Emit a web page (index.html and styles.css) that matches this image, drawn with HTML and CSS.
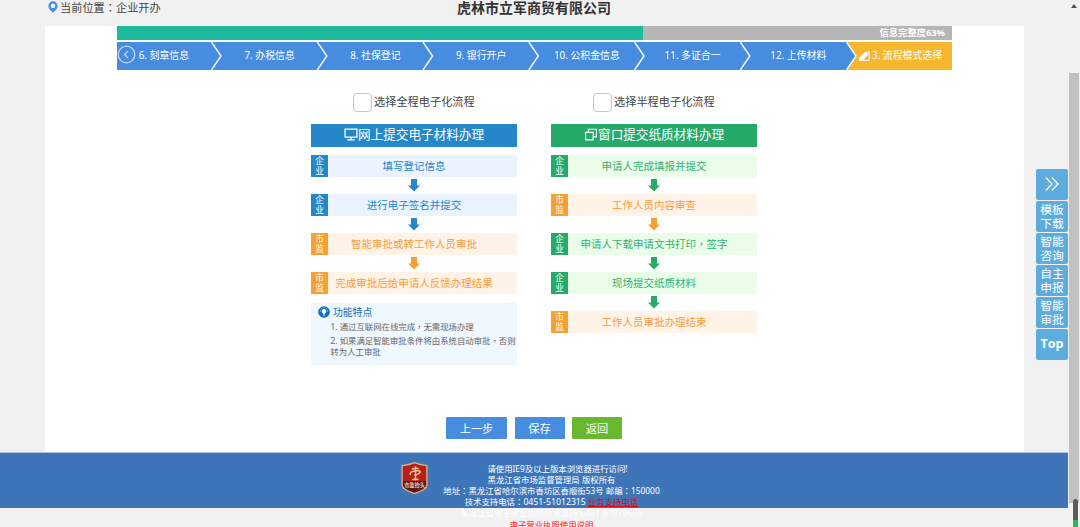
FILE: index.html
```html
<!DOCTYPE html>
<html lang="zh-CN">
<head>
<meta charset="utf-8">
<title>企业开办</title>
<link rel="stylesheet" href="styles.css">
</head>
<body>
<div class="page">
  <header class="top">
    <div class="crumb">
      <svg class="pin" viewBox="0 0 10 12"><path fill="#468cdf" fill-rule="evenodd" d="M5 .3a4.6 4.6 0 0 0-4.6 4.6C.4 8 3.600 10 5 12c1.400-2 4.600-4 4.600-7.100A4.600 4.600 0 0 0 5 .3zM5 2.600a2.300 2.300 0 1 1 0 4.600 2.300 2.300 0 0 1 0-4.600z"/></svg>
      <span>当前位置<span class="punc" lang="zh-TW">：</span>企业开办</span>
    </div>
    <h1 class="company">虎林市立军商贸有限公司</h1>
  </header>

  <main class="panel">
    <div class="progress"><div class="progress-fill" style="width:63%"></div><span class="progress-text">信息完整度63%</span></div>
    <nav class="steps">
      <div class="step">6. 刻章信息</div>
      <div class="step">7. 办税信息</div>
      <div class="step">8. 社保登记</div>
      <div class="step">9. 银行开户</div>
      <div class="step">10. 公积金信息</div>
      <div class="step">11. 多证合一</div>
      <div class="step">12. 上传材料</div>
      <div class="step current">13. 流程模式选择</div>
      <svg class="steps-lines" viewBox="0 0 835 28" fill="none" stroke="#f1f6fc" stroke-width="1.500">
        <path d="M730 0h105v28H730l9.500-14z" fill="#f6b62e" stroke="none"/>
        <path d="M94.500 0l9.500 14-9.500 14M200.300 0l9.500 14-9.500 14M306 0l9.500 14-9.500 14M411.800 0l9.500 14-9.500 14M517.500 0l9.500 14-9.500 14M623.300 0l9.500 14-9.500 14M729.500 0l9.500 14-9.500 14"/>
      </svg>
      <svg class="prev" viewBox="0 0 18 18" fill="none" stroke="#c3daf6"><circle cx="9" cy="9" r="7.900" stroke-width="1.200"/><path d="M10.300 5.800L7.200 9l3.100 3.200" stroke-width="1.300"/></svg>
      <svg class="pencil" viewBox="0 0 12 12" fill="#fff"><path d="M1 8L7.300 1.700q.7-.7 1.400 0l1.600 1.600q.7.700 0 1.400L4 11H1zM6 9.800h5.500V11H4.800z"/></svg>
    </nav>

    <div class="flows">
      <section class="flow online">
        <label class="choice"><span class="box"></span>选择全程电子化流程</label>
        <h2 class="flow-title"><svg class="icon" viewBox="0 0 13 12" fill="none" stroke="#fff" stroke-width="1.200"><path d="M1 1h11v7.500H1zM6.500 8.500V11M3 11h7"/></svg>网上提交电子材料办理</h2>
        <div class="task"><span class="tag">企<br>业</span><span class="name">填写登记信息</span></div>
        <svg class="arrow" viewBox="0 0 12 13"><path d="M3 0h6v6.500h3L6 12.500 0 6.500h3z"/></svg>
        <div class="task"><span class="tag">企<br>业</span><span class="name">进行电子签名并提交</span></div>
        <svg class="arrow" viewBox="0 0 12 13"><path d="M3 0h6v6.500h3L6 12.500 0 6.500h3z"/></svg>
        <div class="task gov"><span class="tag">市<br>监</span><span class="name">智能审批或转工作人员审批</span></div>
        <svg class="arrow gov" viewBox="0 0 12 13"><path d="M3 0h6v6.500h3L6 12.500 0 6.500h3z"/></svg>
        <div class="task gov"><span class="tag">市<br>监</span><span class="name">完成审批后给申请人反馈办理结果</span></div>
        <div class="features">
          <h3 class="features-title"><svg class="bulb" viewBox="0 0 12 12"><circle cx="6" cy="6" r="5.800" fill="#0f70b7"/><path fill="#fff" d="M6 2.800a2.200 2.200 0 0 1 1.200 4.100V8H4.800V6.900A2.200 2.200 0 0 1 6 2.800zM5 8.600h2v.8H5z"/><path stroke="#fff" stroke-width=".7" d="M2 5h1M9 5h1M6 1v1M3 2.300l.6.600M9 2.300l-.6.600"/></svg>功能特点</h3>
          <p class="note">1. 通过互联网在线完成<span class="punc" lang="zh-TW">，</span>无需现场办理</p>
          <p class="note">2. 如果满足智能审批条件将由系统自动审批<span class="punc" lang="zh-TW">，</span>否则<br>转为人工审批</p>
        </div>
      </section>

      <section class="flow window">
        <label class="choice"><span class="box"></span>选择半程电子化流程</label>
        <h2 class="flow-title"><svg class="icon" viewBox="0 0 13 12" fill="none" stroke="#fff" stroke-width="1"><path d="M1.500 4h7v7h-7zM4 4V1.200h7.500v7H8.500"/></svg>窗口提交纸质材料办理</h2>
        <div class="task"><span class="tag">企<br>业</span><span class="name">申请人完成填报并提交</span></div>
        <svg class="arrow" viewBox="0 0 12 13"><path d="M3 0h6v6.500h3L6 12.500 0 6.500h3z"/></svg>
        <div class="task gov"><span class="tag">市<br>监</span><span class="name">工作人员内容审查</span></div>
        <svg class="arrow gov" viewBox="0 0 12 13"><path d="M3 0h6v6.500h3L6 12.500 0 6.500h3z"/></svg>
        <div class="task"><span class="tag">企<br>业</span><span class="name">申请人下载申请文书打印<span class="punc" lang="zh-TW">，</span>签字</span></div>
        <svg class="arrow" viewBox="0 0 12 13"><path d="M3 0h6v6.500h3L6 12.500 0 6.500h3z"/></svg>
        <div class="task"><span class="tag">企<br>业</span><span class="name">现场提交纸质材料</span></div>
        <svg class="arrow" viewBox="0 0 12 13"><path d="M3 0h6v6.500h3L6 12.500 0 6.500h3z"/></svg>
        <div class="task gov"><span class="tag">市<br>监</span><span class="name">工作人员审批办理结束</span></div>
      </section>
    </div>

    <div class="actions">
      <button class="btn wide">上一步</button>
      <button class="btn">保存</button>
      <button class="btn back">返回</button>
    </div>
  </main>

  <footer class="footer">
    <svg class="badge" viewBox="0 0 26 31">
      <path d="M1 3.500Q8 3 13 .7q5 2.300 12 2.800v19q0 4-12 8-12-4-12-8z" fill="#b3221a" stroke="#e0ad7c" stroke-width="1.300"/>
      <path d="M2 18.500h22v4q0 3.500-11 7-11-3.500-11-7z" fill="#571714"/>
      <path d="M14 4v14M10.500 7q4-1.500 6.500-.500M9.500 12.500c-3-2.500 4-4.500 8-4 3 1-1 4-5 4.200M11 17.300q3-1.500 6 0" fill="none" stroke="#f4c28e" stroke-width="1.400"/>
      <text x="13" y="24.200" class="badge-text">市监抬头</text>
    </svg>
    <div class="footer-text">
      <p class="lead">请使用IE9及以上版本浏览器进行访问!</p>
      <p>黑龙江省市场监督管理局 版权所有</p>
      <p>地址<span class="punc" lang="zh-TW">：</span>黑龙江省哈尔滨市香坊区香顺街53号 邮编<span class="punc" lang="zh-TW">：</span>150000</p>
      <p>技术支持电话<span class="punc" lang="zh-TW">：</span><span class="phone">0451-51012315</span> <a class="hot">业务支持电话</a></p>
      <p>黑龙江省电子营业执照技术支持 <span class="phone">0451-87979695</span></p>
      <p class="red">电子营业执照使用说明</p>
    </div>
  </footer>
</div>

<aside class="side">
  <div class="side-item"><svg class="more" viewBox="0 0 14 14" fill="none" stroke="#fff" stroke-width="1.300"><path d="M1 .8L7 7l-6 6.200M7 .8L13 7l-6 6.200"/></svg></div>
  <div class="side-item">模板<br>下载</div>
  <div class="side-item">智能<br>咨询</div>
  <div class="side-item">自主<br>申报</div>
  <div class="side-item">智能<br>审批</div>
  <div class="side-item to-top">Top</div>
</aside>

<div class="scrollbar">
  <svg class="up" viewBox="0 0 6 4"><path d="M3 0l3 4H0z" fill="#505050"/></svg>
  <div class="thumb"></div>
  <div class="meter"><i class="meter-level"></i></div>
</div>
</body>
</html>
```
FILE: styles.css
```css
* { box-sizing: border-box; }
body {
  margin: 0;
  width: 1080px;
  height: 527px;
  overflow: hidden;
  display: flex;
  background: #f1f1f1;
  color: #444;
  font-family: "Noto Sans", "Noto Sans CJK SC", sans-serif;
}
h1, h2, h3, p { margin: 0; font-weight: 400; }
svg { display: block; flex: none; }
.punc { font-family: "Noto Sans CJK TC", sans-serif; line-height: 1; }
.page { width: 1068px; flex: none; }

.top { height: 26px; position: relative; }
.crumb {
  display: flex;
  gap: 2px;
  padding-left: 48px;
  font-size: 11.200px;
  line-height: 15px;
}
.pin { width: 10px; height: 12px; margin-top: 1px; }
.company {
  position: absolute;
  top: -2px;
  left: 0;
  width: 100%;
  text-align: center;
  font-size: 14px;
  line-height: 20px;
  font-weight: 700;
  color: #333;
}

.panel {
  width: 979px;
  height: 426px;
  margin-left: 45px;
  padding: 0 72px;
  background: #fff;
}
.progress {
  display: flex;
  justify-content: space-between;
  height: 14px;
  background: #b6b6b6;
}
.progress-fill { background: #1dbb9b; }
.progress-text {
  padding-right: 7px;
  font-size: 9.300px;
  line-height: 13px;
  font-weight: 700;
  color: #fff;
}
.steps {
  position: relative;
  display: flex;
  height: 28px;
  margin-top: 1.500px;
  background: #468cdf;
  color: #fff;
}
.step {
  flex: none;
  width: 105.750px;
  padding-right: 12px;
  text-align: center;
  white-space: nowrap;
  font-size: 9.900px;
  line-height: 27px;
  z-index: 1;
}
.step.current { width: 94px; padding-right: 0; }
.steps-lines { position: absolute; left: 0; top: 0; width: 835px; height: 28px; }
.prev { position: absolute; left: 0; top: 3.500px; width: 19px; height: 19px; }
.pencil { position: absolute; left: 741px; top: 8px; width: 12px; height: 12px; }

.flows { display: flex; gap: 34px; padding: 22.500px 0 0 194px; height: 346.500px; }
.flow { width: 206px; --main: #2587c8; --text: #2587c8; --soft: #eaf3ff; }
.flow.window { --main: #25aa69; --text: #35b073; --soft: #e9fde9; }
.choice {
  display: flex;
  align-items: center;
  gap: 2px;
  height: 20px;
  padding-left: 42px;
  font-size: 11.200px;
  line-height: 20px;
}
.box { width: 19px; height: 19px; border: 1px solid #c3c7ca; border-radius: 4px; background: #fff; }
.flow-title {
  display: flex;
  justify-content: center;
  align-items: center;
  height: 22.500px;
  margin: 12px 0 8.500px;
  background: var(--main);
  color: #fff;
  font-size: 12.600px;
  line-height: 22px;
}
.icon { width: 14px; height: 13px; margin-top: -1px; }
.task { display: flex; height: 22px; background: var(--soft); color: var(--text); }
.tag {
  width: 17px;
  background: var(--main);
  color: #fff;
  font-size: 8.700px;
  line-height: 10px;
  padding-top: 1px;
  text-align: center;
}
.name { flex: 1; padding-right: 17px; text-align: center; font-size: 10.500px; line-height: 22px; white-space: nowrap; }
.gov { --main: #f99f31; --text: #f99c3d; --soft: #fff3e8; }
.arrow { width: 12px; height: 13px; margin: 2px auto; fill: var(--main); }

.features { height: 62px; margin-top: 9px; padding: 2px 0 0 7px; background: #eff7ff; color: #666; }
.features-title { display: flex; align-items: center; gap: 3px; height: 14px; font-size: 9.800px; color: #0f70b7; }
.bulb { width: 12px; height: 12px; }
.note { padding-left: 12.500px; font-size: 8.400px; line-height: 11.200px; margin-top: 2px; white-space: nowrap; }
.note + .note { margin-top: 3px; }

.actions { display: flex; gap: 7.500px; padding: 1px 0 0 329px; }
.btn {
  width: 50px;
  height: 21.500px;
  padding: 0;
  border: 0;
  border-radius: 1px;
  background: #468cdf;
  color: #fff;
  font: 11.200px "Noto Sans", "Noto Sans CJK SC", sans-serif;
}
.btn.wide { width: 61px; }
.btn.back { background: #68b82f; }

.footer {
  position: relative;
  height: 56px;
  border-top: 1px solid #a7c4e5;
  background: #3e75b9;
  color: #fff;
}
.badge { position: absolute; left: 401px; top: 9px; width: 27px; height: 32px; }
.badge-text { font-size: 5px; font-weight: 700; text-anchor: middle; fill: #f4d0a8; }
.footer-text { padding: 9.500px 0 0 35px; text-align: center; font-size: 8.400px; line-height: 11.200px; }
.lead { padding-left: 12px; }
.phone { font-size: 8.700px; line-height: 1; }
.hot { color: #e60012; text-decoration: underline; }
.red { color: #f22; }

.side {
  position: absolute;
  left: 1036px;
  top: 169px;
  width: 32px;
  display: flex;
  flex-direction: column;
  gap: 1px;
}
.side-item {
  display: flex;
  align-items: center;
  justify-content: center;
  height: 31px;
  padding-bottom: 1px;
  border-radius: 2px;
  background: #5cacde;
  color: #fff;
  font-size: 11.800px;
  line-height: 14.500px;
}
.more { width: 14px; height: 14px; }
.to-top { font: 700 12.500px/15px "Open Sans", sans-serif; padding-bottom: 2px; }

.scrollbar { position: relative; width: 12px; height: 527px; background: #f1f1f1; }
.up { width: 6px; height: 4px; margin: 4px 0 0 3px; }
.thumb { width: 10px; height: 430px; margin: 65px 0 0 1px; background: #c1c1c1; }
.meter { position: absolute; left: 5px; top: 499px; width: 5px; height: 28px; border-radius: 3px 3px 0 0; background: #5a5a5a; padding-top: 21px; }
.meter-level { display: block; height: 7px; background: #2fb457; }
```
